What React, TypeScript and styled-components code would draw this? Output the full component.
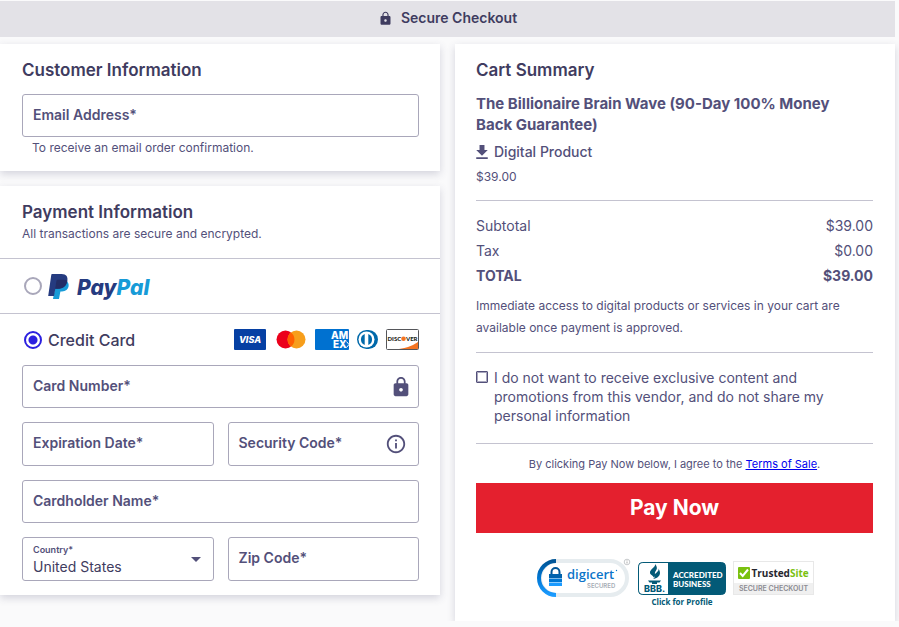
import React from 'react';
import styled, { createGlobalStyle } from 'styled-components';
import { MdLock, MdOutlineInfo } from 'react-icons/md';

const ink = '#3f3c60';
const text = '#53507a';
const outline = '#a9a7ba';
const rule = '#c4c3d0';

const GlobalStyle = createGlobalStyle`
  * { box-sizing: border-box; }
  body {
    margin: 0;
    background: #fafafb;
    color: ${text};
    font: 400 14px/20px Inter, sans-serif;
  }
  input, select, button { font: inherit; color: inherit; margin: 0; }
  h1, h2, h3, p { margin: 0; }
`;

const Page = styled.div`
  padding: 1px 4px 0 0;
`;

const TopBar = styled.header`
  display: flex;
  align-items: center;
  justify-content: center;
  gap: 8px;
  height: 36px;
  margin-bottom: 7px;
  padding-bottom: 2px;
  background: #e3e2e7;
  color: ${ink};
`;

const TopTitle = styled.h1`
  font-size: 14px;
  font-weight: 600;
  line-height: 20px;
`;

const Columns = styled.main`
  display: grid;
  grid-template-columns: 1fr 1fr;
  align-items: start;
  gap: 15px;
`;

const Stack = styled.div`
  display: grid;
  gap: 15px;
`;

const Card = styled.section<{ $side?: 'left' | 'right' }>`
  padding: ${(p) => (p.$side === 'right' ? '12px 22px 15px 21px' : '12px 21px 15px 22px')};
  background: #fff;
  box-shadow: 0 3px 8px rgba(60, 58, 100, 0.2);
`;

const PaymentCard = styled(Card)`
  padding: 12px 0 14px;
`;

const Inset = styled.div`
  padding: 0 21px 0 22px;
`;

const Title = styled.h2`
  color: ${ink};
  font-size: 17px;
  font-weight: 600;
  line-height: 28px;
`;

const Small = styled.p`
  font-size: 12px;
  line-height: 16px;
`;

const Helper = styled(Small)`
  margin-top: 3px;
  padding-left: 10px;
`;

const Rule = styled.hr<{ $top: number; $bottom: number }>`
  height: 1px;
  margin: ${(p) => p.$top}px 0 ${(p) => p.$bottom}px;
  border: 0;
  background: ${rule};
`;

const FieldBox = styled.div<{ $wide?: boolean }>`
  display: grid;
  grid-template-columns: minmax(0, 1fr) auto;
  align-items: center;
  grid-column: ${(p) => (p.$wide ? '1 / -1' : 'auto')};
  min-height: 43px;
  border: 1px solid ${outline};
  border-radius: 3px;
  background: #fff;
`;

const FieldLabel = styled.label`
  grid-area: 1 / 1;
  z-index: 1;
  padding: 0 0 2px 10px;
  font-size: 14px;
  font-weight: 600;
  line-height: 20px;
  pointer-events: none;
`;

const FieldInput = styled.input`
  grid-area: 1 / 1 / 2 / 3;
  align-self: stretch;
  width: 100%;
  min-width: 0;
  padding: 0 10px;
  border: 0;
  background: transparent;
`;

const FieldIcon = styled.span<{ $inset: number }>`
  grid-area: 1 / 2;
  z-index: 1;
  display: flex;
  padding-right: ${(p) => p.$inset}px;
  pointer-events: none;
`;

const EmailField = styled.div`
  margin-top: 10px;
`;

const FieldGrid = styled.div`
  display: grid;
  grid-template-columns: 1fr 1fr;
  grid-auto-rows: 43px 44px;
  gap: 14px;
`;

const SmallLabel = styled.label`
  grid-area: 1 / 1;
  align-self: start;
  z-index: 1;
  padding: 6px 0 0 10px;
  font-size: 9px;
  font-weight: 600;
  line-height: 12px;
  pointer-events: none;
`;

const CountrySelect = styled.select`
  grid-area: 1 / 1 / 2 / 3;
  align-self: stretch;
  width: 100%;
  padding: 16px 30px 0 10px;
  border: 0;
  background: transparent;
  color: ${ink};
  appearance: none;
`;

const Method = styled.div<{ $height: number }>`
  display: flex;
  align-items: center;
  height: ${(p) => p.$height}px;
  padding: 0 21px 0 24px;
`;

const Radio = styled.input`
  appearance: none;
  flex: none;
  width: 18px;
  height: 18px;
  border: 2px solid ${outline};
  border-radius: 50%;
  background: #fff;
  &:checked {
    border-color: #2c20df;
    background: radial-gradient(circle, #2c20df 4px, #fff 5px);
  }
`;

const MethodLabel = styled.label`
  display: flex;
  align-items: center;
  padding-left: 6px;
  color: ${ink};
  font-size: 16px;
  font-weight: 500;
`;

const CardLogos = styled.div`
  display: flex;
  gap: 8px;
  margin-left: auto;
`;

const Product = styled.h3`
  margin-top: 9px;
  padding-right: 20px;
  font-size: 15px;
  font-weight: 700;
  line-height: 21px;
`;

const Kind = styled.p`
  display: flex;
  align-items: center;
  gap: 6px;
  margin: 7px 0 6px;
  font-weight: 500;
`;

const Price = styled.p`
  font-size: 12px;
  line-height: 18px;
`;

const Totals = styled.table`
  width: 100%;
  border-collapse: collapse;
`;

const TotalRow = styled.tr<{ $strong?: boolean }>`
  height: 25px;
  font-weight: ${(p) => (p.$strong ? 700 : 400)};
  th, td { padding: 0; font-weight: inherit; }
  th { text-align: left; }
  td { text-align: right; }
`;

const Notice = styled.p`
  margin-top: 7px;
  font-size: 12px;
  line-height: 22px;
`;

const OptOut = styled.div`
  display: flex;
  align-items: flex-start;
  gap: 6px;
  label { line-height: 19px; }
`;

const Check = styled.input`
  appearance: none;
  flex: none;
  width: 12px;
  height: 12px;
  && { margin-top: 3px; }
  border: 1px solid ${text};
  border-radius: 1px;
  background: #fff;
  box-shadow: inset 0 0 0 1px #a9a7bd;
  &:checked { background: ${text}; }
`;

const Terms = styled.p`
  font-size: 11px;
  line-height: 16px;
  text-align: center;
  a { color: #0000ee; }
`;

const PayButton = styled.button`
  display: block;
  width: 100%;
  height: 50px;
  && { margin: 11px 0 25px; }
  && { color: #fff; font-size: 21px; font-weight: 700; }
  border: 0;
  background: #e4202e;
  cursor: pointer;
`;

const Badges = styled.div`
  display: flex;
  justify-content: center;
  align-items: flex-start;
  gap: 7px;
`;

const Download = () => (
  <svg width="12" height="14" viewBox="5 3 14 17" fill="currentColor" aria-hidden="true">
    <path d="M19 9h-4V3H9v6H5l7 7 7-7zM5 18v2h14v-2H5z" />
  </svg>
);

const PayPal = () => (
  <svg width="106" height="28" viewBox="0 0 106 28" role="img" aria-label="PayPal">
    <path d="M18.5 9C22 11 21.800 19.200 14 19.500h-1.600L11 27H5l2.400-13z" fill="#179bd7" />
    <path d="M4 2h9.500c5 0 6.800 3 5.700 7.500-1 5-4.600 7.200-9.400 7.200H7.300L6 24H.2L3.300 2.700Q3.400 2 4 2z" fill="#253b80" />
    <path d="M8.500 8.500Q8.700 7.800 9.500 7.800h6.200c1.500 0 2.700.3 3.600.9-.9 5.500-4.500 8-9.500 8H7.200z" fill="#222d65" />
    <text x="29" y="23" fontFamily="Inter, sans-serif" fontSize="21" fontWeight="800" fontStyle="italic">
      <tspan fill="#253b80">Pay</tspan><tspan fill="#179bd7">Pal</tspan>
    </text>
  </svg>
);

const Visa = () => (
  <svg width="32" height="21" viewBox="0 0 32 21" role="img" aria-label="Visa">
    <rect width="32" height="21" rx="1" fill="#0640a3" />
    <text x="16" y="14" textAnchor="middle" fill="#fff" fontFamily="Inter, sans-serif" fontSize="9" fontWeight="800" fontStyle="italic">VISA</text>
  </svg>
);

const Mastercard = () => (
  <svg width="33" height="21" viewBox="0 0 33 21" role="img" aria-label="Mastercard">
    <circle cx="11.500" cy="10.500" r="9" fill="#eb001b" />
    <circle cx="22.500" cy="10.500" r="9" fill="#f79e1b" />
    <path d="M17 3.400a9 9 0 0 1 0 14.200a9 9 0 0 1 0-14.200z" fill="#ff5f00" />
  </svg>
);

const Amex = () => (
  <svg width="34" height="21" viewBox="0 0 34 21" role="img" aria-label="American Express">
    <rect width="34" height="21" rx="1" fill="#0071d0" />
    <g fill="#fff" fontFamily="Inter, sans-serif" fontSize="10" fontWeight="800">
      <text x="16" y="10">AM</text>
      <text x="18" y="19">EX</text>
    </g>
    <path d="M31.500 12.500l2.500 3L31.500 18.500" fill="none" stroke="#fff" />
  </svg>
);

const Diners = () => (
  <svg width="21" height="21" viewBox="0 0 21 21" role="img" aria-label="Diners Club">
    <rect x="0" y="1" width="21" height="19" rx="9.500" fill="#0069aa" />
    <circle cx="9.500" cy="10.500" r="8" fill="#fff" />
    <path d="M7.700 5a5.900 5.900 0 0 0 0 11zM11.300 5a5.900 5.900 0 0 1 0 11z" fill="#0069aa" />
  </svg>
);

const Discover = () => (
  <svg width="33" height="21" viewBox="0 0 33 21" role="img" aria-label="Discover">
    <rect x=".5" y=".5" width="32" height="20" rx="1" fill="#fff" stroke="#55565a" />
    <path d="M32 13v7H13q11-1.500 19-7z" fill="#f47421" />
    <g fill="#231f20" fontFamily="Lato, sans-serif" fontSize="6" fontWeight="900">
      <text x="1.500" y="12">DISC</text>
      <text x="31.500" y="12" textAnchor="end">VER</text>
    </g>
    <circle cx="17.500" cy="9.800" r="2.300" fill="#f47421" />
  </svg>
);

const DigiCert = () => (
  <svg width="95" height="41" viewBox="0 0 95 41" role="img" aria-label="DigiCert Secured">
    <defs>
      <linearGradient id="arc" x1="0" y1="0" x2="0" y2="1">
        <stop offset="0" stopColor="#005596" />
        <stop offset=".5" stopColor="#0077d4" />
        <stop offset="1" stopColor="#1b9bff" />
      </linearGradient>
    </defs>
    <rect x="4" y="3" width="87" height="34" rx="17" fill="#fff" stroke="#e6ecef" strokeWidth="4" />
    <path d="M20 3a17 17 0 0 0 0 34" fill="none" stroke="url(#arc)" strokeWidth="4" />
    <path d="M15.500 17v-3a4 4 0 0 1 8 0v3" fill="none" stroke="#005596" strokeWidth="2" />
    <path d="M13 16h13v4H13z" fill="#0062ad" />
    <path d="M13 20.500h13v3.500H13z" fill="#0077d4" />
    <path d="M13 24.500h13V28H13z" fill="#1b9bff" />
    <text x="31" y="21" fill="#0b74c9" fontFamily="Open Sans, sans-serif" fontSize="13" fontWeight="600">digicert</text>
    <circle cx="80.500" cy="12.500" r=".7" fill="#0b74c9" />
    <text x="51" y="30" fill="#a7adb5" fontFamily="Inter, sans-serif" fontSize="6" fontWeight="600">SECURED</text>
    <circle cx="91" cy="4" r="2.800" fill="#fff" stroke="#a0a4aa" strokeWidth=".6" />
    <path d="M91 3.500v2M91 2.200v.6" stroke="#888" strokeWidth=".7" />
  </svg>
);

const Bbb = () => (
  <svg width="88" height="48" viewBox="0 0 88 48" role="img" aria-label="BBB Accredited Business, click for profile">
    <rect x=".5" y="4.500" width="87" height="32" rx="4" fill="#035a77" stroke="#035a77" />
    <path d="M5 5h25v31H5q-4 0-4-4V9q0-4 4-4z" fill="#fff" />
    <path d="M17 6c1 3.500-5.500 5-5 9 .3 2 3.500 2.500 3.500 4.500C18 17.500 16.500 16 17 14.500c.5-2 4-4 0-8.500zM20.500 10.500c1 3.500-4.500 4.500-4 7.500.3 1.800-.5 2.500-1.500 3 4-.4 7-3 7-6 0-1.500-.9-3.500-1.500-4.500zM10 22.500h13l-1.500 2h-2.500v1.500h-5v-1.500h-2.500z" fill="#035a77" />
    <text x="6" y="34" fill="#035a77" fontFamily="Inter, sans-serif" fontSize="9" fontWeight="800">BBB.</text>
    <g fill="#fff" fontFamily="Lato, sans-serif" fontSize="8" fontWeight="900">
      <text x="35" y="20">ACCREDITED</text>
      <text x="35" y="29">BUSINESS</text>
    </g>
    <text x="44" y="47" textAnchor="middle" fill="#035a77" fontFamily="Open Sans, sans-serif" fontSize="8" fontWeight="700">Click for Profile</text>
  </svg>
);

const TrustedSite = () => (
  <svg width="81" height="40" viewBox="0 0 81 40" role="img" aria-label="TrustedSite Secure Checkout">
    <rect x=".5" y="3.500" width="80" height="33" fill="#fff" stroke="#e8e8e8" />
    <path d="M1 25h79v11H1z" fill="#f0f0f0" />
    <rect x="5" y="9" width="12" height="12" rx="1" fill="#7ac10f" />
    <path d="M7 15l2.700 3L15 11.500" fill="none" stroke="#fff" strokeWidth="2" />
    <text x="18.500" y="19" fontFamily="Open Sans, sans-serif" fontSize="10" fontWeight="700">
      <tspan fill="#26262e">Trusted</tspan><tspan fill="#7ac10f">Site</tspan>
    </text>
    <text x="40.500" y="33" textAnchor="middle" fill="#8b8b92" fontFamily="Inter, sans-serif" fontSize="7" fontWeight="600">SECURE CHECKOUT</text>
  </svg>
);

const Caret = () => (
  <svg width="10" height="5" viewBox="0 0 10 5" aria-hidden="true">
    <path d="M0 0h10L5 5z" fill={text} />
  </svg>
);

type FieldProps = { id: string; label: string; wide?: boolean; inset?: number; icon?: React.ReactNode };

const Field = ({ id, label, wide, inset = 0, icon }: FieldProps) => (
  <FieldBox $wide={wide}>
    <FieldLabel htmlFor={id}>{label}</FieldLabel>
    <FieldInput id={id} required />
    {icon && <FieldIcon $inset={inset}>{icon}</FieldIcon>}
  </FieldBox>
);

export default function App() {
  return (
    <>
      <GlobalStyle />
      <Page>
        <TopBar>
          <MdLock size={15} />
          <TopTitle>Secure Checkout</TopTitle>
        </TopBar>
        <Columns>
          <Stack>
            <Card>
              <Title>Customer Information</Title>
              <EmailField>
                <Field id="email" label="Email Address*" />
              </EmailField>
              <Helper>To receive an email order confirmation.</Helper>
            </Card>
            <PaymentCard>
              <Inset>
                <Title>Payment Information</Title>
                <Small>All transactions are secure and encrypted.</Small>
              </Inset>
              <Rule $top={16} $bottom={0} />
              <Method $height={54}>
                <Radio type="radio" name="method" id="paypal" />
                <MethodLabel htmlFor="paypal"><PayPal /></MethodLabel>
              </Method>
              <Rule $top={0} $bottom={0} />
              <Method $height={51}>
                <Radio type="radio" name="method" id="card" defaultChecked />
                <MethodLabel htmlFor="card">Credit Card</MethodLabel>
                <CardLogos>
                  <Visa />
                  <Mastercard />
                  <Amex />
                  <Diners />
                  <Discover />
                </CardLogos>
              </Method>
              <Inset>
                <FieldGrid>
                  <Field id="number" label="Card Number*" wide inset={6} icon={<MdLock size={22} />} />
                  <Field id="expiry" label="Expiration Date*" />
                  <Field id="code" label="Security Code*" inset={11} icon={<MdOutlineInfo size={22} />} />
                  <Field id="name" label="Cardholder Name*" wide />
                  <FieldBox>
                    <SmallLabel htmlFor="country">Country*</SmallLabel>
                    <CountrySelect id="country" defaultValue="US">
                      <option value="US">United States</option>
                    </CountrySelect>
                    <FieldIcon $inset={12}><Caret /></FieldIcon>
                  </FieldBox>
                  <Field id="zip" label="Zip Code*" />
                </FieldGrid>
              </Inset>
            </PaymentCard>
          </Stack>
          <Card $side="right">
            <Title>Cart Summary</Title>
            <Product>The Billionaire Brain Wave (90-Day 100% Money Back Guarantee)</Product>
            <Kind><Download />Digital Product</Kind>
            <Price>$39.00</Price>
            <Rule $top={14} $bottom={12} />
            <Totals>
              <tbody>
                <TotalRow><th scope="row">Subtotal</th><td>$39.00</td></TotalRow>
                <TotalRow><th scope="row">Tax</th><td>$0.00</td></TotalRow>
                <TotalRow $strong><th scope="row">TOTAL</th><td>$39.00</td></TotalRow>
              </tbody>
            </Totals>
            <Notice>Immediate access to digital products or services in your cart are available once payment is approved.</Notice>
            <Rule $top={13} $bottom={15} />
            <OptOut>
              <Check type="checkbox" id="optout" />
              <label htmlFor="optout">
                I do not want to receive exclusive content and promotions from this vendor, and do not share my personal information
              </label>
            </OptOut>
            <Rule $top={18} $bottom={12} />
            <Terms>By clicking Pay Now below, I agree to the <a href="#terms">Terms of Sale</a>.</Terms>
            <PayButton type="button">Pay Now</PayButton>
            <Badges>
              <DigiCert />
              <Bbb />
              <TrustedSite />
            </Badges>
          </Card>
        </Columns>
      </Page>
    </>
  );
}
